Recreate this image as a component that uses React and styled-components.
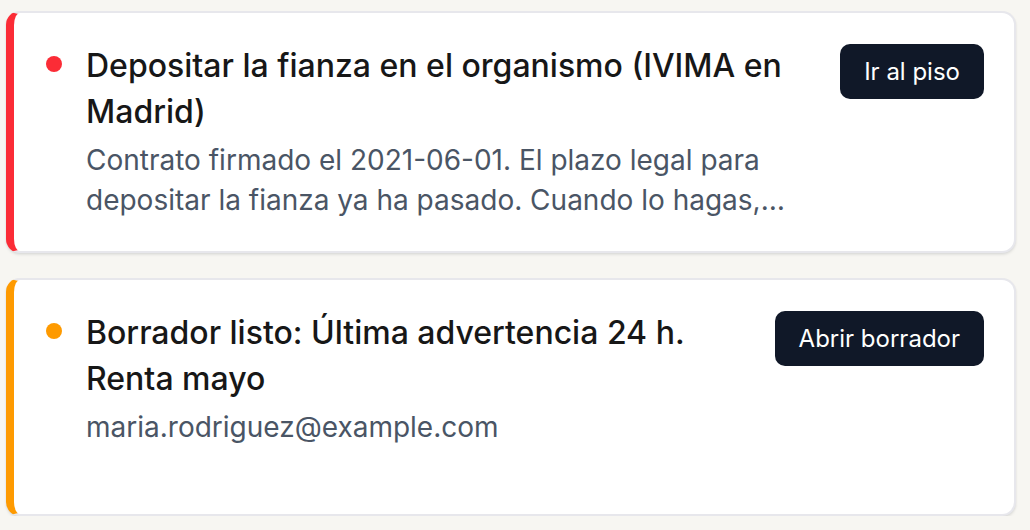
import styled, { createGlobalStyle } from "styled-components";

const GlobalStyle = createGlobalStyle`
  html, body {
    margin: 0;
    padding: 0;
    background: #f7f6f2;
  }
  body {
    font-family: Inter, "Noto Sans", sans-serif;
    -webkit-font-smoothing: antialiased;
  }
`;

const tasks = [
  {
    id: 1,
    tone: "#fb2c36",
    title: "Depositar la fianza en el organismo (IVIMA en Madrid)",
    detail:
      "Contrato firmado el 2021-06-01. El plazo legal para depositar la fianza ya ha pasado. Cuando lo hagas, sube el justificante para tenerlo a mano.",
    action: "Ir al piso",
  },
  {
    id: 2,
    tone: "#fe9a00",
    title: "Borrador listo: Última advertencia 24 h. Renta mayo",
    detail: "maria.rodriguez@example.com",
    action: "Abrir borrador",
    tall: true,
  },
];

function App() {
  return (
    <>
      <GlobalStyle />
      <List>
        {tasks.map((task) => (
          <Card key={task.id} $tone={task.tone} $tall={task.tall}>
            <Dot $tone={task.tone} />
            <Body>
              <Title>{task.title}</Title>
              <Detail>{task.detail}</Detail>
            </Body>
            <ActionButton type="button">{task.action}</ActionButton>
          </Card>
        ))}
      </List>
    </>
  );
}

const List = styled.div`
  display: flex;
  flex-direction: column;
  gap: 25px;
  padding: 11px 14px 0 6px;
`;

const Card = styled.div`
  display: flex;
  align-items: flex-start;
  box-sizing: border-box;
  min-height: ${(p) => (p.$tall ? "238px" : "auto")};
  padding: 30px 30px 31px 32px;
  background: #ffffff;
  border: 2px solid #e7e7ec;
  border-left: 8px solid ${(p) => p.$tone};
  border-radius: 14px;
  box-shadow: 0 2px 3px rgba(16, 24, 40, 0.08), 0 1px 2px rgba(16, 24, 40, 0.05);
`;

const Dot = styled.span`
  flex: none;
  width: 16px;
  height: 16px;
  margin-top: 13px;
  border-radius: 50%;
  background: ${(p) => p.$tone};
`;

const Body = styled.div`
  flex: 1;
  min-width: 0;
  margin-left: 24px;
  margin-right: 32px;
`;

const Title = styled.div`
  font-size: 32px;
  line-height: 46px;
  font-weight: 500;
  color: #171717;
`;

const Detail = styled.div`
  margin-top: 5px;
  font-size: 28px;
  line-height: 40px;
  color: #4a5565;
  display: -webkit-box;
  -webkit-box-orient: vertical;
  -webkit-line-clamp: 2;
  overflow: hidden;
`;

const ActionButton = styled.button`
  flex: none;
  height: 55px;
  margin-top: 1px;
  padding: 0 24px;
  border: none;
  border-radius: 10px;
  background: #101828;
  color: #ffffff;
  font-family: Inter, "Noto Sans", sans-serif;
  font-size: 24px;
  font-weight: 400;
  white-space: nowrap;
  cursor: pointer;
`;

export default App;
